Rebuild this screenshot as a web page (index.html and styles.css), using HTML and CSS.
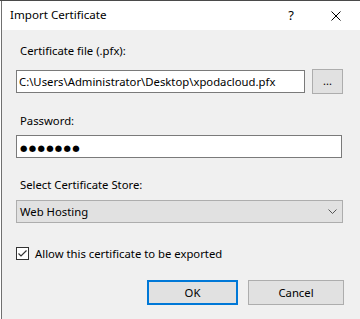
FILE: index.html
```html
<!DOCTYPE html>
<html lang="en">
<head>
    <meta charset="UTF-8">
    <meta name="viewport" content="width=device-width, initial-scale=1.0">
    <title>Import Certificate</title>
    <link rel="stylesheet" href="styles.css">
</head>
<body>
    <div class="window">
        <div class="titlebar">
            <span class="title">Import Certificate</span>
            <div class="caption-buttons">
                <span class="cap-btn help">?</span>
                <span class="cap-btn close">
                    <svg width="10" height="10" viewBox="0 0 10 10">
                        <path d="M0.5 0.5 L9.5 9.5 M9.5 0.5 L0.5 9.5" stroke="#000" stroke-width="1" fill="none"/>
                    </svg>
                </span>
            </div>
        </div>
        <div class="client">
            <div class="field-label first">Certificate file (.pfx):</div>
            <div class="file-row">
                <div class="textbox file-path">C:\Users\Administrator\Desktop\xpodacloud.pfx</div>
                <div class="btn browse">...</div>
            </div>

            <div class="field-label">Password:</div>
            <div class="textbox password"><span class="dots">●●●●●●●</span></div>

            <div class="field-label">Select Certificate Store:</div>
            <div class="combo">
                <span>Web Hosting</span>
                <svg class="chevron" width="9" height="5" viewBox="0 0 9 5">
                    <path d="M0.5 0.5 L4.5 4.5 L8.5 0.5" stroke="#555" stroke-width="1" fill="none"/>
                </svg>
            </div>

            <div class="check-row">
                <span class="checkbox">
                    <svg width="11" height="11" viewBox="0 0 11 11">
                        <path d="M1.5 5.5 L4 8 L9.5 2.5" stroke="#333" stroke-width="1.2" fill="none"/>
                    </svg>
                </span>
                <span>Allow this certificate to be exported</span>
            </div>

            <div class="actions">
                <div class="btn default ok">OK</div>
                <div class="btn cancel">Cancel</div>
            </div>
        </div>
    </div>
</body>
</html>
```

FILE: styles.css
```css
body {
    margin: 0;
    padding: 0;
    background: #fff;
    border-top: 1px solid #4a4a4a;
    font-family: "Noto Sans", Arial, sans-serif;
    font-size: 11.3px;
    color: #000;
}
.window {
    margin-left: 1px;
    border-left: 1px solid #707070;
    background: #f0f0f0;
    height: 318px;
}
.titlebar {
    height: 29px;
    background: #fff;
    display: flex;
    align-items: center;
    justify-content: space-between;
    padding-left: 8px;
}
.title {
    line-height: 16px;
    margin-top: -1px;
    font-size: 11.6px;
}
.caption-buttons {
    display: flex;
    height: 29px;
}
.cap-btn {
    width: 46px;
    display: flex;
    align-items: center;
    justify-content: center;
}
.help {
    font-size: 13px;
    padding-left: 4px;
    margin-top: -1px;
}
.close svg {
    display: block;
    margin-right: 2px;
}
.client {
    padding: 0 16px 0 14px;
}
.field-label {
    line-height: 16px;
    padding-left: 4px;
    margin-top: 19px;
    margin-bottom: 6px;
}
.field-label.first {
    margin-top: 13px;
    margin-bottom: 10px;
}
.file-row {
    display: flex;
    align-items: center;
    height: 25px;
}
.textbox {
    box-sizing: border-box;
    height: 23px;
    background: #fff;
    border: 1px solid #7a7a7a;
    padding-left: 2px;
    line-height: 21px;
    white-space: nowrap;
    overflow: hidden;
}
.file-path {
    width: 289px;
}
.password {
    width: 326px;
}
.dots {
    font-family: "DejaVu Sans", sans-serif;
    font-size: 8.5px;
    letter-spacing: 1.3px;
    padding-left: 1px;
}
.btn {
    box-sizing: border-box;
    background: #e1e1e1;
    border: 1px solid #adadad;
    display: flex;
    align-items: center;
    justify-content: center;
}
.browse {
    width: 31px;
    height: 25px;
    margin-left: 7px;
    font-size: 11px;
    padding-bottom: 2px;
}
.combo {
    box-sizing: border-box;
    width: 327px;
    height: 23px;
    margin-top: 7px;
    background: #e1e1e1;
    border: 1px solid #adadad;
    display: flex;
    align-items: center;
    justify-content: space-between;
    padding: 0 5px 0 3px;
}
.chevron {
    display: block;
}
.check-row {
    display: flex;
    align-items: center;
    margin-top: 23px;
    height: 14px;
}
.checkbox {
    box-sizing: border-box;
    width: 13px;
    height: 13px;
    border: 1px solid #333;
    background: #fff;
    margin-right: 6px;
    display: flex;
}
.checkbox svg {
    display: block;
}
.actions {
    display: flex;
    justify-content: flex-end;
    margin-top: 20px;
}
.actions .btn {
    height: 25px;
}
.ok {
    width: 91px;
    border: 2px solid #0078d7;
    margin-right: 10px;
}
.cancel {
    width: 96px;
}
```
